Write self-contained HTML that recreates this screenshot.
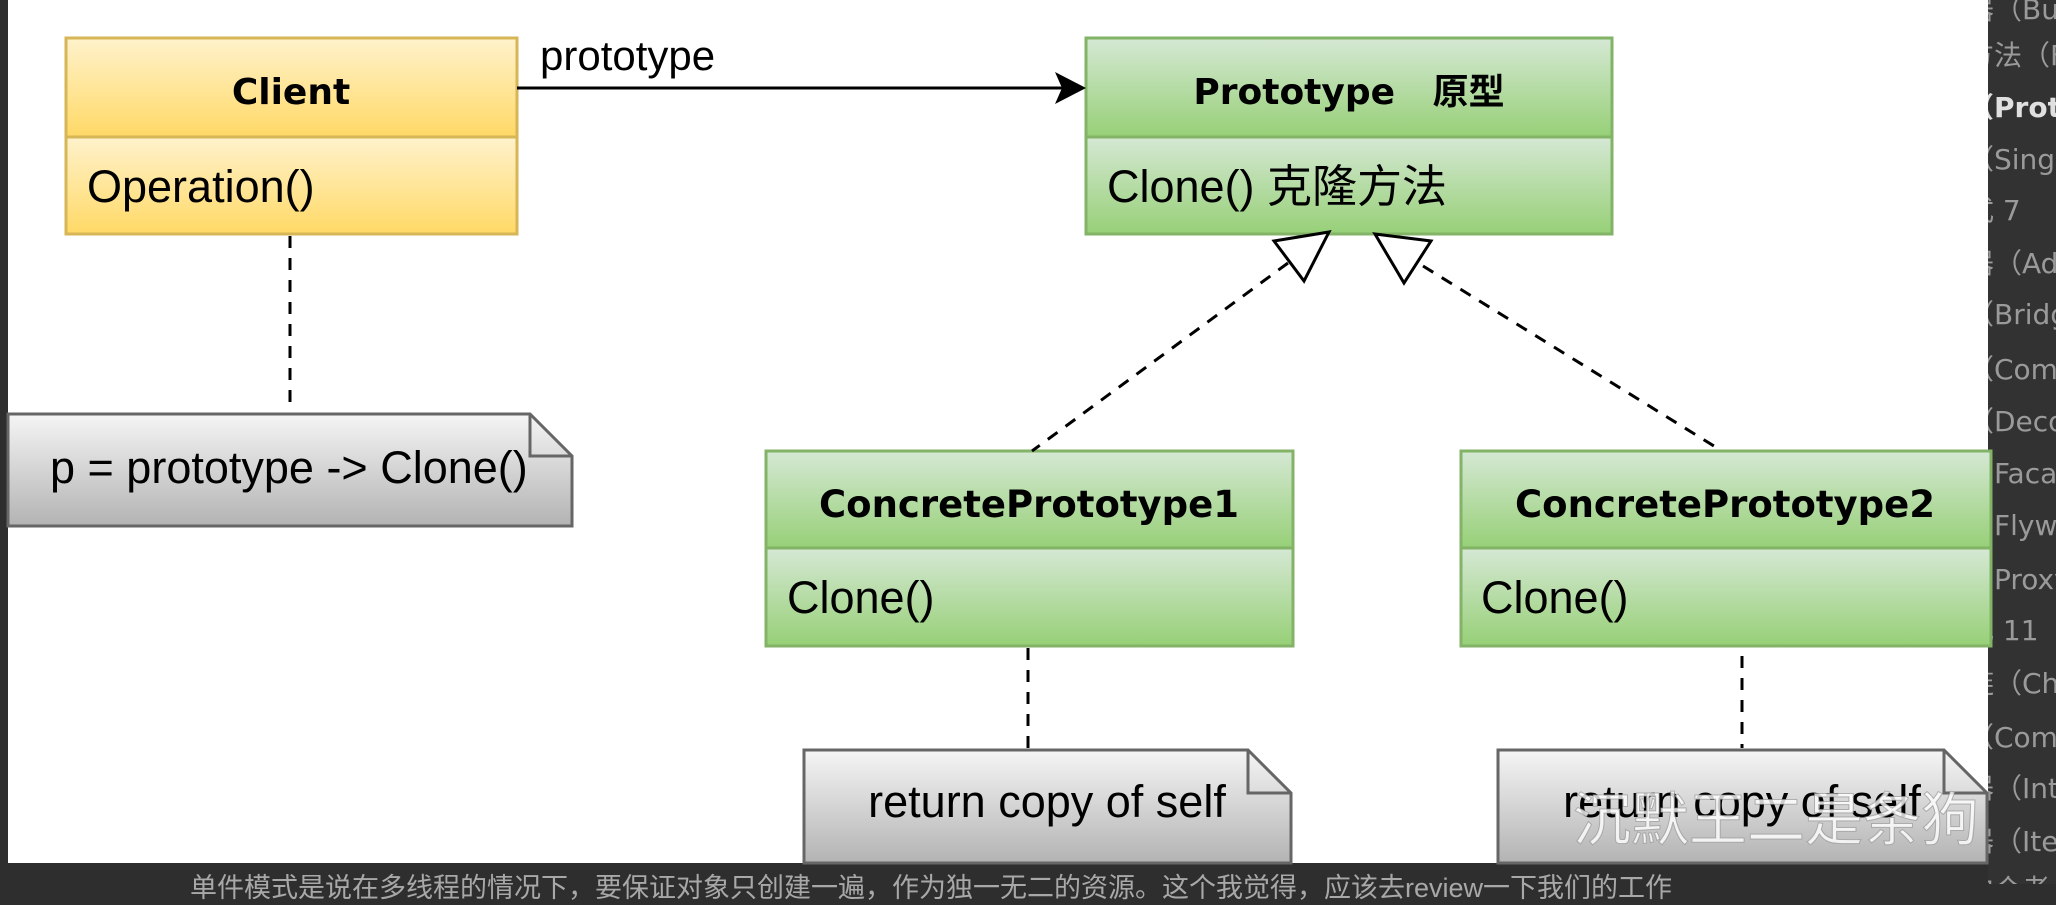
<!DOCTYPE html>
<html><head><meta charset="utf-8"><style>
html,body{margin:0;padding:0;}
body{width:2056px;height:884px;background:#2e2e2e;position:relative;overflow:hidden;font-family:"Liberation Sans","Noto Sans CJK SC",sans-serif;}
#panel{position:absolute;left:1988px;top:0;width:68px;height:884px;background:#323232;overflow:hidden;}
#panel div{position:absolute;left:-22px;white-space:nowrap;font-size:28px;color:#9a9a9a;font-family:"DejaVu Sans","Noto Sans CJK SC",sans-serif;}
#bottom{position:absolute;left:190px;top:866px;font-size:27px;color:#a8a8a8;white-space:nowrap;font-family:"Liberation Sans","Noto Sans CJK SC",sans-serif;}
</style></head><body>
<div id="bottom">单件模式是说在多线程的情况下，要保证对象只创建一遍，作为独一无二的资源。这个我觉得，应该去review一下我们的工作</div>
<div id="panel">
<div style="top:-12px">器（Bu</div>
<div style="top:34px">方法（F</div>
<div style="top:86px;color:#e0e0e0;font-weight:bold">（Proto</div>
<div style="top:138px">（Singl</div>
<div style="top:189px">式 7</div>
<div style="top:242px">器（Ad</div>
<div style="top:293px">（Bridg</div>
<div style="top:348px">（Comp</div>
<div style="top:400px">（Deco</div>
<div style="top:452px">（Facad</div>
<div style="top:504px">（Flywe</div>
<div style="top:558px">（Proxy</div>
<div style="top:609px">式 11</div>
<div style="top:662px">链（Ch</div>
<div style="top:716px">（Comm</div>
<div style="top:767px">器（Int</div>
<div style="top:820px">器（Ite</div>
<div style="top:868px">中介者（M</div>
</div>
<svg width="2056" height="884" style="position:absolute;left:0;top:0">
<defs>
<linearGradient id="yg" x1="0" y1="0" x2="0" y2="1"><stop offset="0" stop-color="#fff2cc"/><stop offset="1" stop-color="#ffd966"/></linearGradient>
<linearGradient id="gg" x1="0" y1="0" x2="0" y2="1"><stop offset="0" stop-color="#d5e8d4"/><stop offset="1" stop-color="#97d077"/></linearGradient>
<linearGradient id="ng" x1="0" y1="0" x2="0" y2="1"><stop offset="0" stop-color="#f5f5f5"/><stop offset="1" stop-color="#b3b3b3"/></linearGradient>
</defs>
<rect x="8" y="0" width="1980" height="863" fill="#fff"/>
<g stroke="#d6b656" stroke-width="3">
<rect x="66" y="38" width="451" height="99" fill="url(#yg)"/>
<rect x="66" y="137" width="451" height="97" fill="url(#yg)"/>
</g>
<g stroke="#82b366" stroke-width="3">
<rect x="1086" y="38" width="526" height="99" fill="url(#gg)"/>
<rect x="1086" y="137" width="526" height="97" fill="url(#gg)"/>
<rect x="766" y="451" width="527" height="97" fill="url(#gg)"/>
<rect x="766" y="548" width="527" height="98" fill="url(#gg)"/>
<rect x="1461" y="451" width="530" height="97" fill="url(#gg)"/>
<rect x="1461" y="548" width="530" height="98" fill="url(#gg)"/>
</g>
<g stroke="#666" stroke-width="3" fill="url(#ng)">
<path d="M8 414 H530 L572 456 V526 H8 Z"/>
<path d="M804 750 H1248 L1291 793 V863 H804 Z"/>
<path d="M1498 750 H1944 L1987 793 V863 H1498 Z"/>
</g>
<g fill="none" stroke="#666" stroke-width="3">
<path d="M530 414 V456 H572"/><path d="M1248 750 V793 H1291"/><path d="M1944 750 V793 H1987"/>
</g>
<line x1="517" y1="88" x2="1070" y2="88" stroke="#000" stroke-width="3"/>
<path d="M1086 88 L1055 72 L1062 88 L1055 104 Z" fill="#000"/>
<g stroke="#000" stroke-width="3" stroke-dasharray="12 10" fill="none">
<line x1="290" y1="236" x2="290" y2="403"/>
<line x1="1028" y1="648" x2="1028" y2="748"/>
<line x1="1742" y1="656" x2="1742" y2="748"/>
<line x1="1288" y1="263" x2="1032" y2="451"/>
<line x1="1423" y1="266" x2="1722" y2="451"/>
</g>
<g stroke="#000" stroke-width="3" fill="#fff" stroke-linejoin="miter">
<path d="M1274 241 L1329 232 L1304 281 Z"/>
<path d="M1375 234 L1431 241 L1404 283 Z"/>
</g>
<g font-family="DejaVu Sans, Noto Sans CJK SC, sans-serif" font-weight="bold" font-size="36" text-anchor="middle" fill="#000">
<text x="291" y="104">Client</text>
<text x="1349" y="104" xml:space="preserve">Prototype   原型</text>
<text x="1029" y="517" font-size="37">ConcretePrototype1</text>
<text x="1725" y="517" font-size="37">ConcretePrototype2</text>
</g>
<g font-family="Liberation Sans, Noto Sans CJK SC, sans-serif" font-size="45" fill="#000">
<text x="87" y="202">Operation()</text>
<text x="1107" y="202">Clone() 克隆方法</text>
<text x="787" y="613">Clone()</text>
<text x="1481" y="613">Clone()</text>
<text x="540" y="70" font-size="42">prototype</text>
<text x="50" y="483">p = prototype -&gt; Clone()</text>
<text x="1047" y="817" text-anchor="middle">return copy of self</text>
<text x="1742" y="817" text-anchor="middle">return copy of self</text>
</g>
<text x="1776" y="840" text-anchor="middle" font-family="Noto Sans CJK SC, sans-serif" font-size="58" fill="#fff" fill-opacity="0.8" stroke="#888" stroke-width="1" stroke-opacity="0.6">沉默王二是条狗</text>
</svg>
</body></html>
